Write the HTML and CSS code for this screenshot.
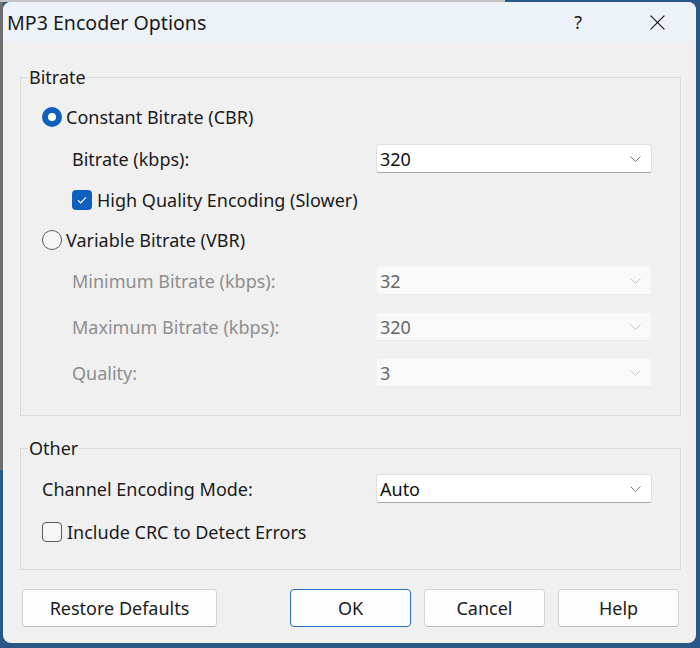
FILE: index.html
```html
<!DOCTYPE html>
<html lang="en">
<head>
<meta charset="utf-8">
<title>MP3 Encoder Options</title>
<link rel="stylesheet" href="styles.css">
</head>
<body>
<div class="window">
  <div class="titlebar">
    <span class="title">MP3 Encoder Options</span>
    <span class="help">?</span>
    <span class="close"><svg width="15" height="15" viewBox="0 0 15 15"><path d="M0.6 0.6 L14.4 14.4 M14.4 0.6 L0.6 14.4" stroke="#1a1a1a" stroke-width="1.2" fill="none"/></svg></span>
  </div>
  <div class="content">
    <fieldset class="group group-bitrate">
      <legend>Bitrate</legend>
      <div class="row">
        <span class="radio checked"></span><span class="opt">Constant Bitrate (CBR)</span>
      </div>
      <div class="row combo-row">
        <span class="label indent">Bitrate (kbps):</span>
        <span class="combo"><span class="value">320</span><svg class="chev" width="11" height="6" viewBox="0 0 11 6"><path d="M0.5 0.5 L5.5 5.5 L10.5 0.5" fill="none" stroke="#7a7a7a" stroke-width="1"/></svg></span>
      </div>
      <div class="row indent">
        <span class="check checked"><svg width="20" height="20" viewBox="0 0 20 20"><path d="M6 10.2 L8.7 12.9 L14 7.4" fill="none" stroke="#fff" stroke-width="1.2"/></svg></span><span class="opt">High Quality Encoding (Slower)</span>
      </div>
      <div class="row row-vbr">
        <span class="radio"></span><span class="opt">Variable Bitrate (VBR)</span>
      </div>
      <div class="row combo-row row-min disabled">
        <span class="label indent">Minimum Bitrate (kbps):</span>
        <span class="combo"><span class="value">32</span><svg class="chev" width="11" height="6" viewBox="0 0 11 6"><path d="M0.5 0.5 L5.5 5.5 L10.5 0.5" fill="none" stroke="#c6c6c6" stroke-width="1"/></svg></span>
      </div>
      <div class="row combo-row disabled">
        <span class="label indent">Maximum Bitrate (kbps):</span>
        <span class="combo"><span class="value">320</span><svg class="chev" width="11" height="6" viewBox="0 0 11 6"><path d="M0.5 0.5 L5.5 5.5 L10.5 0.5" fill="none" stroke="#c6c6c6" stroke-width="1"/></svg></span>
      </div>
      <div class="row combo-row disabled">
        <span class="label indent">Quality:</span>
        <span class="combo"><span class="value">3</span><svg class="chev" width="11" height="6" viewBox="0 0 11 6"><path d="M0.5 0.5 L5.5 5.5 L10.5 0.5" fill="none" stroke="#c6c6c6" stroke-width="1"/></svg></span>
      </div>
    </fieldset>

    <fieldset class="group group-other">
      <legend>Other</legend>
      <div class="row combo-row">
        <span class="label">Channel Encoding Mode:</span>
        <span class="combo"><span class="value">Auto</span><svg class="chev" width="11" height="6" viewBox="0 0 11 6"><path d="M0.5 0.5 L5.5 5.5 L10.5 0.5" fill="none" stroke="#7a7a7a" stroke-width="1"/></svg></span>
      </div>
      <div class="row row-crc">
        <span class="check"></span><span class="opt">Include CRC to Detect Errors</span>
      </div>
    </fieldset>

    <div class="buttons">
      <button class="btn btn-wide">Restore Defaults</button>
      <div class="btn-group">
        <button class="btn btn-default">OK</button>
        <button class="btn">Cancel</button>
        <button class="btn">Help</button>
      </div>
    </div>
  </div>
</div>
</body>
</html>
```

FILE: styles.css
```css
* { box-sizing: border-box; }

html, body {
  margin: 0;
}

body {
  width: 700px;
  height: 648px;
  overflow: hidden;
  padding: 2px 4px 5px 3px;
  font-family: "Noto Sans", "Segoe UI", sans-serif;
  font-size: 18px;
  color: #1b1b1b;
  background:
    linear-gradient(#c4c4c4, #c4c4c4) 0 0 / 505px 2px no-repeat,
    linear-gradient(#6e6e6e, #6e6e6e) 0 0 / 3px 470px no-repeat,
    #2a5886;
}

.window {
  width: 693px;
  height: 641px;
  background: #f0f0f0;
  border-radius: 8px;
  overflow: hidden;
  display: flex;
  flex-direction: column;
}

.titlebar {
  height: 40px;
  flex: none;
  display: flex;
  align-items: center;
  padding: 0 31px 0 4px;
  background: #edf2f8;
}

.title {
  flex: 1;
  font-size: 19.6px;
  color: #1a1a1a;
}

.help {
  margin-right: 68px;
  font-size: 18px;
  color: #1a1a1a;
}

.close svg { display: block; }

.content {
  padding: 25px 15px 0 17px;
  display: flex;
  flex-direction: column;
}

.group {
  margin: 0;
  min-width: 0;
  border: 1px solid #dadada;
  padding: 20px 28px 28px 8px;
  display: flex;
  flex-direction: column;
  gap: 17px;
}

.group legend {
  margin-left: -1px;
  padding: 0 1px;
  line-height: 20px;
  font-size: 18px;
}

.group-other {
  margin-top: 22px;
  padding-top: 16px;
  padding-bottom: 27px;
  gap: 19px;
}

.row {
  display: flex;
  align-items: center;
  height: 20px;
  padding-left: 13px;
  line-height: 20px;
}

.row.indent { padding-left: 43px; }

.combo-row { height: 29px; }

.row-vbr { margin-top: 3px; }
.row-min { margin-top: -1px; }

.label { flex: 1; }
.label.indent { padding-left: 30px; }

.disabled .label { color: #8e8e8e; }

.radio {
  width: 20px;
  height: 20px;
  border-radius: 50%;
  border: 1px solid #5e5e5e;
  background: #f7f7f7;
  margin-right: 4px;
  flex: none;
}

.radio.checked {
  border: 6px solid #0f5fbe;
  background: #ffffff;
}

.check {
  width: 20px;
  height: 20px;
  border-radius: 4px;
  border: 1px solid #5e5e5e;
  background: #f7f7f7;
  margin-right: 5px;
  flex: none;
}

.check.checked {
  border: none;
  background: #0f5fbe;
}

.check svg { display: block; }

.combo {
  width: 276px;
  height: 29px;
  flex: none;
  display: flex;
  align-items: center;
  justify-content: space-between;
  padding: 0 10px 0 3px;
  background: #ffffff;
  border: 1px solid #e0e0e0;
  border-bottom-color: #a9a9a9;
  border-radius: 3px;
  color: #111;
}

.disabled .combo {
  background: #f9f9f9;
  border-color: #f3f3f3;
  border-bottom-color: #ebebeb;
  color: #666666;
}

.chev { display: block; }

.buttons {
  margin-top: 19px;
  padding: 0 2px;
  display: flex;
  justify-content: space-between;
}

.btn-group {
  display: flex;
  gap: 13px;
}

.btn {
  width: 121px;
  height: 38px;
  font-family: inherit;
  font-size: 18px;
  color: #1b1b1b;
  background: #fdfdfd;
  border: 1px solid #d4d4d4;
  border-bottom-color: #b9b9b9;
  border-radius: 4px;
  padding: 0;
}

.btn-wide { width: 195px; }

.btn-default {
  border-color: #2a6cc2;
}
```
